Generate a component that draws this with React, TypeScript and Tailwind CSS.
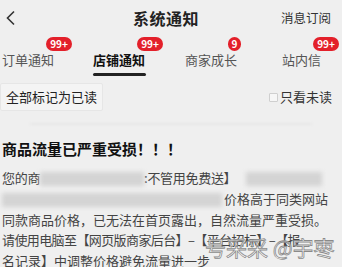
import React from 'react';

const Badge: React.FC<{ text: string; round?: boolean }> = ({ text, round }) => (
  <span
    className={`absolute -top-[14px] flex h-[14px] items-center justify-center rounded-full bg-[#e3202a] text-[10px] font-bold leading-none text-white ${
      round ? '-right-[4px] w-[13px]' : '-right-[18px] w-[26px]'
    }`}
  >
    {text}
  </span>
);

const Blur: React.FC<{ w: string }> = ({ w }) => (
  <span className={`inline-block h-[14px] align-middle ${w} bg-[#d4d4d4] blur-[2px]`} />
);

const tabs = [
  { label: '订单通知', badge: '99+', w: 'w-[91px]' },
  { label: '店铺通知', badge: '99+', w: 'w-[92px]', active: true },
  { label: '商家成长', badge: '9', w: 'w-[97px]', round: true },
  { label: '站内信', badge: '99+', w: 'w-[60px]' },
];

export default function App() {
  return (
    <div
      className="relative h-[267px] w-[342px] overflow-hidden bg-[#efefef] text-[#222]"
      style={{ fontFamily: '"Noto Sans CJK SC", "Noto Sans", sans-serif' }}
    >
      {/* header */}
      <div className="flex h-[36px] items-center justify-between pl-[5px] pr-[11px]">
        <svg width="12" height="16" viewBox="0 0 12 16" fill="none" stroke="#333" strokeWidth="1.6">
          <path d="M9 1.5 L2.5 8 L9 14.5" />
        </svg>
        <div className="ml-[34px] text-[16px] font-bold tracking-[0.5px]">系统通知</div>
        <div className="text-[12.5px] text-[#333]">消息订阅</div>
      </div>

      {/* tabs */}
      <div className="flex h-[42px] pl-[2px] pt-[5px]">
        {tabs.map((t) => (
          <div key={t.label} className={`relative flex h-full flex-col items-start justify-center ${t.w}`}>
            <span
              className={`relative text-[13px] leading-[18px] ${
                t.active ? 'font-bold text-[#111]' : 'text-[#555]'
              }`}
            >
              {t.label}
              <Badge text={t.badge} round={t.round} />
            </span>
            {t.active && <span className="absolute bottom-[2px] left-0 h-[3px] w-[53px] rounded-full bg-[#222]" />}
          </div>
        ))}
      </div>

      {/* actions */}
      <div className="mt-[5px] flex items-center justify-between pr-[10px]">
        <button className="h-[28px] rounded-[2px] border border-[#e6e6e6] bg-[#f4f4f4] px-[5px] text-[13px] text-[#222]">
          全部标记为已读
        </button>
        <label className="flex items-center gap-[2px] text-[13px] text-[#333]">
          <span className="inline-block h-[9px] w-[9px] rounded-[1px] border border-[#cfcfcf] bg-[#f6f6f6]" />
          只看未读
        </label>
      </div>

      <div className="mx-[30px] mt-[12px] h-[2px] bg-[#e8e8e8] blur-[1px]" />

      {/* message */}
      <div className="px-[2px] pt-[14px]">
        <div className="text-[15px] font-bold leading-[20px] text-[#111]">商品流量已严重受损！！！</div>
        <div className="mt-[9px] text-[13px] leading-[20.8px] text-[#444]">
          <div className="whitespace-nowrap tracking-[-0.3px]">
            您的商<Blur w="w-[104px]" />:不管用免费送】
            <Blur w="w-[76px] ml-[10px]" />
          </div>
          <div className="whitespace-nowrap">
            <Blur w="w-[220px]" />
            <span className="ml-[2px]">价格高于同类网站</span>
          </div>
          <div className="whitespace-nowrap">同款商品价格，已无法在首页露出，自然流量严重受损。</div>
          <div className="whitespace-nowrap tracking-[-0.6px]">请使用电脑至【网页版商家后台】–【平台招标】–【报</div>
          <div className="whitespace-nowrap">名记录】中调整价格避免流量进一步</div>
        </div>
      </div>

      {/* watermark */}
      <div className="absolute left-[205px] top-[232px] whitespace-nowrap text-[21px] leading-[30px] text-white/80 [-webkit-text-stroke:0.8px_#8a8a8a]">
        号采采 @宇枣
      </div>
    </div>
  );
}
